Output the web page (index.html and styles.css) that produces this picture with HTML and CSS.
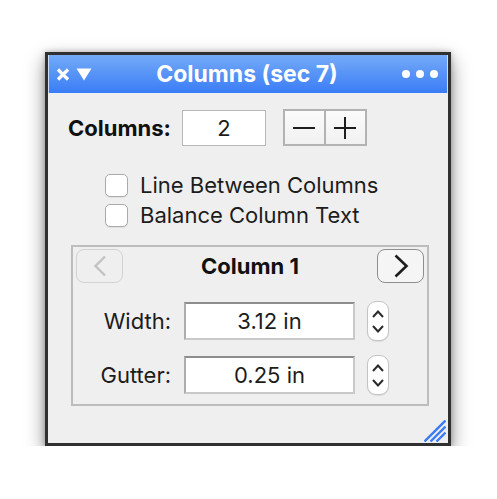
FILE: index.html
```html
<!DOCTYPE html>
<html>
<head>
<meta charset="utf-8">
<link rel="stylesheet" href="styles.css">
</head>
<body>
<div class="stage">
  <div class="window">
    <div class="titlebar">
      <div class="tb-left">
        <svg class="ic-close" width="14" height="13" viewBox="0 0 14 13"><path d="M2 1.5 L12 11.5 M12 1.5 L2 11.5" stroke="#fff" stroke-width="3.2" stroke-linecap="butt"/></svg>
        <svg class="ic-tri" width="16" height="13" viewBox="0 0 16 13"><path d="M0.5 0.5 H15.5 L8 12.5 Z" fill="#fff"/></svg>
      </div>
      <div class="tb-title">Columns (sec 7)</div>
      <div class="tb-right">
        <span class="dot"></span><span class="dot"></span><span class="dot"></span>
      </div>
    </div>
    <div class="content">
      <div class="row-columns">
        <span class="lbl-bold">Columns:</span>
        <div class="numbox">2</div>
        <div class="pm">
          <div class="pm-btn"><svg width="22" height="22" viewBox="0 0 22 22"><path d="M0 11 H22" stroke="#1e1e1e" stroke-width="2"/></svg></div>
          <div class="pm-btn"><svg width="22" height="22" viewBox="0 0 22 22"><path d="M0 11 H22 M11 0 V22" stroke="#1e1e1e" stroke-width="2"/></svg></div>
        </div>
      </div>
      <div class="checks">
        <div class="check"><span class="box"></span><span class="check-text">Line Between Columns</span></div>
        <div class="check"><span class="box"></span><span class="check-text">Balance Column Text</span></div>
      </div>
      <div class="group">
        <div class="group-head">
          <div class="nav nav-disabled"><svg width="14" height="22" viewBox="0 0 14 22"><path d="M12 1.5 L2.5 11 L12 20.5" fill="none" stroke="#c3c3c3" stroke-width="2.4"/></svg></div>
          <div class="group-title">Column 1</div>
          <div class="nav"><svg width="16" height="24" viewBox="0 0 16 24"><path d="M2.5 1.5 L13.5 12 L2.5 22.5" fill="none" stroke="#1e1e1e" stroke-width="2.6"/></svg></div>
        </div>
        <div class="field-row">
          <span class="field-lbl">Width:</span>
          <div class="field-input">3.12 in</div>
          <div class="updown">
            <svg width="12" height="8" viewBox="0 0 12 8"><path d="M1 7 L6 1.5 L11 7" fill="none" stroke="#2a2a2a" stroke-width="2"/></svg>
            <svg width="12" height="8" viewBox="0 0 12 8"><path d="M1 1 L6 6.5 L11 1" fill="none" stroke="#2a2a2a" stroke-width="2"/></svg>
          </div>
        </div>
        <div class="field-row">
          <span class="field-lbl">Gutter:</span>
          <div class="field-input">0.25 in</div>
          <div class="updown">
            <svg width="12" height="8" viewBox="0 0 12 8"><path d="M1 7 L6 1.5 L11 7" fill="none" stroke="#2a2a2a" stroke-width="2"/></svg>
            <svg width="12" height="8" viewBox="0 0 12 8"><path d="M1 1 L6 6.5 L11 1" fill="none" stroke="#2a2a2a" stroke-width="2"/></svg>
          </div>
        </div>
      </div>
    </div>
    <svg class="grip" width="22" height="22" viewBox="0 0 22 22"><path d="M0.5 21.5 L21.5 0.5 M6.5 21.5 L21.5 6.5 M12.5 21.5 L21.5 12.5" stroke="#3b7cf5" stroke-width="2.4"/></svg>
  </div>
</div>
</body>
</html>
```
FILE: styles.css
```css
html, body {
  margin: 0;
  padding: 0;
  background: #ffffff;
}
body {
  font-family: Inter, "Liberation Sans", Arial, sans-serif;
  color: #1c1c1c;
}
.stage {
  padding: 52px 0 0 45px;
}
.window {
  position: relative;
  width: 400px;
  height: 388px;
  border: 3px solid #303030;
  background: #efefef;
  box-shadow: 0 8px 18px rgba(0,0,0,0.45), 0 0 6px rgba(0,0,0,0.25);
  box-sizing: content-box;
  display: flex;
  flex-direction: column;
}
.titlebar {
  height: 38px;
  flex: none;
  display: grid;
  grid-template-columns: 1fr auto 1fr;
  align-items: center;
  padding: 0 10px 0 8px;
  background: linear-gradient(#74abf8, #3a7cf6);
  box-shadow: inset 1px 0 0 #cfdff8, inset -1px 0 0 #cfdff8;
}
.tb-left {
  display: flex;
  align-items: center;
  gap: 6px;
}
.tb-title {
  color: #fff;
  font-weight: 700;
  font-size: 23px;
}
.tb-right {
  display: flex;
  justify-content: flex-end;
  gap: 6px;
}
.dot {
  width: 8px;
  height: 8px;
  border-radius: 50%;
  background: #fff;
}
.content {
  flex: 1;
  display: flex;
  flex-direction: column;
}
.row-columns {
  display: flex;
  align-items: center;
  margin-top: 16px;
  padding-left: 20px;
  height: 37px;
}
.lbl-bold {
  font-weight: 700;
  font-size: 22px;
  color: #111;
}
.numbox {
  margin-left: 11px;
  width: 82px;
  height: 34px;
  border: 1px solid #b9b9b9;
  background: #fff;
  font-size: 22px;
  display: flex;
  align-items: center;
  justify-content: center;
}
.pm {
  margin-left: 17px;
  display: flex;
  border: 2px solid #b3b3b3;
  height: 33px;
  background: linear-gradient(#fbfbfb, #f1f1f1);
}
.pm-btn {
  width: 39px;
  display: flex;
  align-items: center;
  justify-content: center;
}
.pm-btn + .pm-btn {
  border-left: 2px solid #b3b3b3;
}
.checks {
  margin-top: 27px;
  padding-left: 57px;
  display: flex;
  flex-direction: column;
  gap: 6px;
}
.check {
  display: flex;
  align-items: center;
  height: 24px;
  gap: 12px;
}
.box {
  width: 21px;
  height: 21px;
  border: 1px solid #aaaaaa;
  border-radius: 5px;
  background: #fff;
  box-shadow: 0 1px 1px rgba(0,0,0,0.06);
}
.check-text {
  font-size: 22px;
}
.group {
  margin: 18px 19px 0 23px;
  height: 157px;
  border: 2px solid #bdbdbd;
  display: flex;
  flex-direction: column;
}
.group-head {
  display: flex;
  align-items: center;
  padding: 2px 3px 0 3px;
}
.nav {
  width: 45px;
  height: 32px;
  border: 1.5px solid #8e8e8e;
  border-radius: 8px;
  background: #f5f5f5;
  display: flex;
  align-items: center;
  justify-content: center;
}
.nav-disabled {
  border-color: #d2d2d2;
  background: transparent;
}
.group-title {
  flex: 1;
  text-align: center;
  font-weight: 700;
  font-size: 22px;
  color: #111;
}
.field-row {
  display: flex;
  align-items: center;
  height: 40px;
  margin-top: 18px;
}
.field-row + .field-row {
  margin-top: 14px;
}
.field-lbl {
  width: 98px;
  text-align: right;
  font-size: 22px;
}
.field-input {
  margin-left: 13px;
  width: 167px;
  height: 34px;
  border: 2px solid #c9c9c9;
  border-top-color: #8d8d8d;
  border-left-color: #adadad;
  background: #fff;
  font-size: 22px;
  display: flex;
  align-items: center;
  justify-content: center;
}
.updown {
  margin-left: 12px;
  width: 20px;
  height: 38px;
  border: 1px solid #c4c4c4;
  border-radius: 9px;
  background: #fff;
  box-shadow: 0 1px 1px rgba(0,0,0,0.08);
  display: flex;
  flex-direction: column;
  align-items: center;
  justify-content: center;
  gap: 7px;
}
.grip {
  position: absolute;
  right: 2px;
  bottom: 1px;
}
```
